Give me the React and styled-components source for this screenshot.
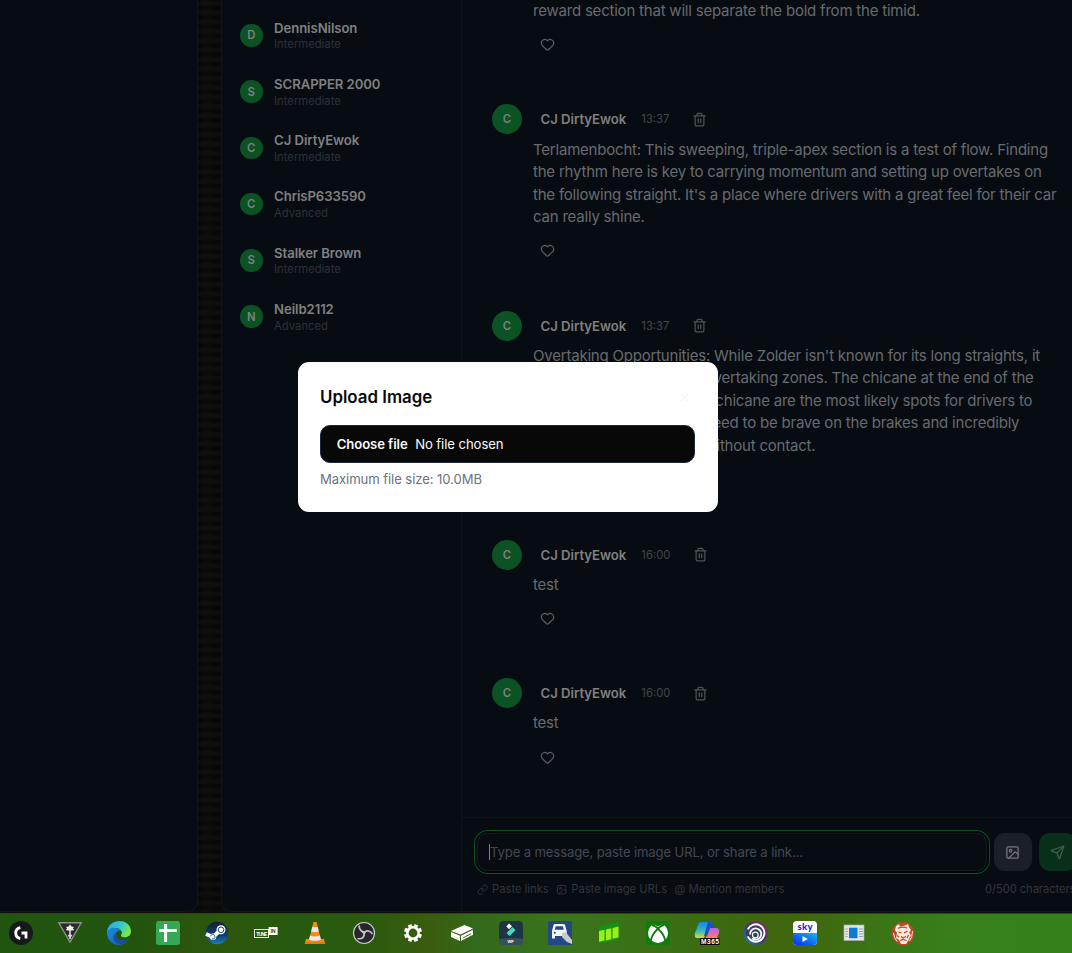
import React from 'react';
import styled, { createGlobalStyle } from 'styled-components';
import { Heart, Trash2, Image as ImageIcon, Send, X, Link } from 'lucide-react';

const Global = createGlobalStyle`
  * { box-sizing: border-box; }
  html, body { margin: 0; padding: 0; }
  body { background: #070c14; overflow: hidden; font-family: Inter, "Liberation Sans", sans-serif; }
`;

const Screen = styled.div`
  width: 1072px;
  height: 953px;
  overflow: hidden;
  display: flex;
  flex-direction: column;
`;

const Page = styled.div`
  height: 913px;
  display: flex;
  overflow: hidden;
  background-color: #0a0a0a;
  background-image:
    linear-gradient(27deg, #080808 4px, transparent 4.5px),
    linear-gradient(207deg, #080808 4px, transparent 4.5px),
    linear-gradient(90deg, #0e0e0e 9.4px, transparent 9.4px),
    linear-gradient(#0f0f0f 25%, #0c0c0c 50%, #0a0a0a 75%, #0d0d0d 100%);
  background-position: 6px 1px, 15.4px 5.7px, 6px 0, 6px 1px;
  background-size: 18.75px 9.375px;
`;

const SidePanel = styled.div`
  width: 198px;
  height: 912px;
  flex: none;
  background: #070c14;
  border-right: 1px solid #10151c;
  border-bottom: 1px solid #10151c;
  border-bottom-right-radius: 11px;
`;

const Main = styled.div`
  margin-left: 23px;
  width: 880px;
  height: 912px;
  flex: none;
  display: flex;
  background: #070c12;
  border-left: 1px solid #10151a;
  border-bottom: 1px solid #10151a;
  border-bottom-left-radius: 11px;
`;

const Members = styled.div`
  width: 240px;
  flex: none;
  padding: 18.6px 0 0 18px;
  border-right: 1px solid #0f141b;
  display: flex;
  flex-direction: column;
  gap: 22.5px;
`;

const Member = styled.div`
  display: flex;
  align-items: center;
  gap: 11.6px;
  height: 33.75px;
`;

const Avatar = styled.div`
  width: ${(p) => p.$size}px;
  height: ${(p) => p.$size}px;
  flex: none;
  border-radius: 50%;
  background: #0b5225;
  color: #808080;
  display: flex;
  align-items: center;
  justify-content: center;
  font-size: 11.25px;
  font-weight: 600;
`;

const MemberName = styled.div`
  font-size: 13.125px;
  line-height: 18.75px;
  font-weight: 600;
  letter-spacing: -0.06px;
  color: #808080;
`;

const MemberLevel = styled.div`
  font-size: 11.25px;
  line-height: 15px;
  color: #2d3138;
`;

const Chat = styled.div`
  flex: 1;
  display: flex;
  flex-direction: column;
`;

const Messages = styled.div`
  height: 817px;
  flex: none;
  overflow: hidden;
  display: flex;
  flex-direction: column;
  justify-content: flex-end;
  padding: 0 0 38.7px 30px;
`;

const MessageRow = styled.div`
  display: flex;
  flex: none;
  gap: 11px;
  margin-top: 38.8px;
`;

const MessageContent = styled.div`
  display: flex;
  flex-direction: column;
`;

const MessageHead = styled.div`
  height: 30px;
  margin-bottom: 4.1px;
  padding-left: 7.5px;
  display: flex;
  align-items: center;
  color: #4f5257;
`;

const Author = styled.span`
  font-size: 13.125px;
  font-weight: 600;
  color: #808080;
`;

const Time = styled.span`
  font-size: 11.25px;
  color: #41464e;
  margin: 0 22.6px 0 15.1px;
`;

const MessageText = styled.div`
  font-size: 15px;
  line-height: 22.5px;
  letter-spacing: -0.21px;
  color: #686b6e;
  white-space: pre;
`;

const Reaction = styled.div`
  height: 43.4px;
  padding: 14.6px 0 0 6.8px;
  color: #5a5d63;
  svg { display: block; }
`;

const Composer = styled.div`
  flex: 1;
  border-top: 1px solid #0f141b;
  padding: 15px 0 0 15px;
`;

const ComposeRow = styled.div`
  display: flex;
  height: 38px;
`;

const TextBox = styled.div`
  width: 510px;
  flex: none;
  border: 1px solid #14191f;
  border-radius: 11px;
  box-shadow: 0 0 0 2px #03060a, 0 0 0 3px #0b5225;
  display: flex;
  align-items: center;
  padding-left: 11px;
  margin-right: 7px;
  font-size: 13.125px;
  letter-spacing: -0.13px;
  color: #434952;
`;

const Caret = styled.span`
  width: 1px;
  height: 16px;
  background: #808080;
`;

const IconButton = styled.div`
  width: 38px;
  height: 38px;
  flex: none;
  margin-right: 7px;
  padding-right: 1px;
  border-radius: 11px;
  display: flex;
  align-items: center;
  justify-content: center;
  background: ${(p) => p.$bg};
  color: ${(p) => p.$fg};
`;

const Hints = styled.div`
  display: flex;
  align-items: center;
  height: 15px;
  margin-top: 10.7px;
  font-size: 11.25px;
  letter-spacing: -0.02px;
  color: #31353c;
  white-space: nowrap;
`;

const Hint = styled.span`
  display: flex;
  align-items: center;
  gap: 3.75px;
  margin-right: 7.5px;
`;

const Counter = styled.span`
  margin-left: 193px;
  letter-spacing: -0.1px;
`;

const Modal = styled.div`
  position: absolute;
  left: 298px;
  top: 362px;
  width: 420px;
  height: 150px;
  border-radius: 11px;
  background: #ffffff;
  padding: 22px;
`;

const ModalHead = styled.div`
  display: flex;
  align-items: center;
  justify-content: space-between;
  height: 26px;
  padding-right: 5.5px;
  margin-bottom: 15px;
  font-size: 16.875px;
  font-weight: 600;
  color: #0a0a0a;
`;

const FileField = styled.div`
  height: 37.5px;
  width: 375px;
  border-radius: 10px;
  border: 1px solid #1e293b;
  background: #080808;
  color: #f8fafc;
  display: flex;
  align-items: center;
  gap: 7.5px;
  padding-left: 15.7px;
  font-size: 13.125px;
  letter-spacing: -0.07px;
`;

const Choose = styled.span`
  font-weight: 600;
`;

const SizeNote = styled.div`
  margin-top: 7.5px;
  line-height: 18.75px;
  font-size: 13.125px;
  letter-spacing: -0.09px;
  color: #6b7280;
`;

const Taskbar = styled.div`
  height: 40px;
  border-top: 1px solid #24471c;
  display: flex;
  align-items: center;
  gap: 25px;
  padding: 0 0 1px 9px;
  background: linear-gradient(90deg, #20550f 0, #22540f 130px, #2d560c 215px, #265a10 300px, #2c5a0e 370px, #3a5c0e 430px, #33691a 475px, #39741c 560px, #397016 660px, #3c690f 730px, #40660e 800px, #3a7414 870px, #37801a 960px, #36801a 1072px);
  svg { display: block; flex: none; overflow: visible; }
`;

const Tile = ({ children }) => (
  <svg width="24" height="24" viewBox="0 0 24 24">{children}</svg>
);

const members = [
  ['DennisNilson', 'Intermediate'],
  ['SCRAPPER 2000', 'Intermediate'],
  ['CJ DirtyEwok', 'Intermediate'],
  ['ChrisP633590', 'Advanced'],
  ['Stalker Brown', 'Intermediate'],
  ['Neilb2112', 'Advanced'],
];

const messages = [
  {
    time: '13:37',
    text: "Terlamenbocht: This sweeping, triple-apex section is a test of flow. Finding\nthe rhythm here is key to carrying momentum and setting up overtakes on\nthe following straight. It's a place where drivers with a great feel for their car\ncan really shine.",
  },
  {
    time: '13:37',
    text: "Overtaking Opportunities: While Zolder isn't known for its long straights, it\ndoes have several prime overtaking zones. The chicane at the end of the\nback straight and the final chicane are the most likely spots for drivers to\nmake a move, but they'll need to be brave on the brakes and incredibly\naccurate to make it stick without contact.",
  },
  { time: '16:00', text: 'test' },
  { time: '16:00', text: 'test' },
];

const EarlierMessage = styled.div`
  flex: none;
  padding-left: 41px;
`;

function Message({ time, text }) {
  return (
    <MessageRow>
      <Avatar $size={30}>C</Avatar>
      <MessageContent>
        <MessageHead>
          <Author>CJ DirtyEwok</Author>
          <Time>{time}</Time>
          <Trash2 size={15} />
        </MessageHead>
        <MessageText>{text}</MessageText>
        <Reaction><Heart size={15} /></Reaction>
      </MessageContent>
    </MessageRow>
  );
}

function TaskbarIcons() {
  return (
    <>
      <Tile>
        <circle cx="12" cy="12" r="12" fill="#17191b" />
        <path d="M11.3 6.5A5.6 5.6 0 0 0 11.3 17.5M12.5 12H17V17.5" fill="none" stroke="#fff" strokeWidth="2.8" />
      </Tile>
      <Tile>
        <path d="M.8 1.8H23.2L12 21Z" fill="#282b28" stroke="#8c918a" strokeWidth="1.4" />
        <path d="M12 3.5L13.5 5.5L16 6L14.8 7.5L16.5 9L14 9.5H10L7.5 9L9.2 7.5L8 6L10.5 5.5Z" fill="#eee" />
        <path d="M12 9V18M10.3 14L12 16L13.7 14" fill="none" stroke="#ddd" strokeWidth="1.6" />
      </Tile>
      <Tile>
        <defs>
          <linearGradient id="edgeTop" x1="0" y1="0" x2="1" y2=".5"><stop offset="0" stopColor="#28a5e7" /><stop offset=".55" stopColor="#2fc7d2" /><stop offset="1" stopColor="#7be64b" /></linearGradient>
          <linearGradient id="edgeBottom" x1="0" y1="0" x2="1" y2="1"><stop offset="0" stopColor="#1a8ee1" /><stop offset="1" stopColor="#1258ab" /></linearGradient>
        </defs>
        <path d="M0 11C1-3 23-4 24 10C24 15 20 17 16 16C13 15.5 14 14 15 12C15 7 6 4 0 11Z" fill="url(#edgeTop)" />
        <path d="M0 12C1 6 10 5 14 10C10 9 8 12 9 15C10 20 17 21 22 18C18 25 8 26 3 20C1 18 0 15 0 12Z" fill="url(#edgeBottom)" />
        <path d="M8 12C4 17 8 24 15 23C19 22 21 20 22 18C17 20 9 20 8 12Z" fill="#164f9e" />
      </Tile>
      <Tile>
        <rect width="24" height="24" rx="2.5" fill="#35a853" />
        <path d="M3 9.5H21M9.6 3V21" stroke="#fff" strokeWidth="3" />
      </Tile>
      <Tile>
        <defs><linearGradient id="steam" x1="0" y1="0" x2="0" y2="1"><stop offset="0" stopColor="#11203d" /><stop offset=".6" stopColor="#123d71" /><stop offset="1" stopColor="#1683b5" /></linearGradient></defs>
        <circle cx="12" cy="12" r="11.2" fill="url(#steam)" />
        <path d="M1 13L8 16L15.5 9" stroke="#fff" strokeWidth="4" fill="none" />
        <circle cx="16" cy="8.8" r="4.5" fill="#fff" />
        <circle cx="16" cy="8.8" r="2.8" fill="none" stroke="#174777" strokeWidth="1" />
        <circle cx="8" cy="15.8" r="3.2" fill="#fff" />
        <path d="M5.5 15.3A2.3 2.3 0 1 1 7 18" fill="none" stroke="#174777" strokeWidth=".8" />
      </Tile>
      <Tile>
        <rect x=".5" y="8.5" width="14" height="8" fill="none" stroke="#ddebd8" />
        <rect x="14.6" y="6" width="9" height="8" fill="#fff" />
        <text x="2.3" y="14.6" fontFamily="Liberation Sans" fontSize="5" fontWeight="700" fill="#fff" textLength="11">TUNE</text>
        <text x="16.4" y="12" fontFamily="Liberation Sans" fontSize="5.3" fontWeight="700" fill="#2b4d1a">IN</text>
      </Tile>
      <Tile>
        <path d="M3 18H21L22.3 23H1.7Z" fill="#f38a12" />
        <path d="M10.5 1H13.5L18 19Q12 22 6 19Z" fill="#f58b16" />
        <path d="M9.3 6H14.7L15.8 10.5Q12 12 8.1 10.5Z" fill="#e5e8ea" />
        <path d="M7.1 14.5Q12 16.5 16.9 14.5L18 18.5Q12 21 6 18.5Z" fill="#e9ecee" />
        <path d="M2 22H22" stroke="#db6810" />
      </Tile>
      <Tile>
        <circle cx="12" cy="12" r="10.5" fill="#27262b" stroke="#c9cbca" strokeWidth="1.2" />
        <path d="M7.2 4.5C7 9 9.5 10.5 12 11.5C15 9 18 9.5 20.5 13M12 11.5C13 16 10 18.5 5.5 17.5" fill="none" stroke="#c6c6ca" strokeWidth="1.7" />
        <circle cx="12" cy="11.5" r="1.5" fill="#c9c9c9" />
      </Tile>
      <Tile>
        <circle cx="12" cy="12" r="5.7" fill="none" stroke="#fff" strokeWidth="2.6" />
        <g stroke="#fff" strokeWidth="3.8">
          {[22.5, 67.5, 112.5, 157.5, 202.5, 247.5, 292.5, 337.5].map((a) => (
            <path key={a} d="M12 3V5.7" transform={`rotate(${a} 12 12)`} />
          ))}
        </g>
      </Tile>
      <Tile>
        <path d="M1 10L14.5 4L23 7.5L10.5 13.5Z" fill="#fff" />
        <path d="M1 11L10 14.7V20L1 16ZM11 14.7L23 8.8V13.8L11 20Z" fill="#fff" />
        <path d="M13 17L21 12.6" stroke="#3c6d22" strokeWidth="1" />
      </Tile>
      <Tile>
        <rect width="24" height="24" rx="4.5" fill="#1d3444" />
        <path d="M0 18Q12 16 24 18V20Q24 24 20 24H4Q0 24 0 20Z" fill="#36505c" />
        <path d="M10 2.5L13 5.3L10 8.3L7.3 5.5Z" fill="#fff" />
        <path d="M7.5 12L13.5 6L16.5 9.2L10.5 15Z" fill="#44ddc2" />
        <text x="8.4" y="22.2" fontFamily="Liberation Sans" fontSize="4.2" fontWeight="700" fill="#fff">WF</text>
      </Tile>
      <Tile>
        <rect width="24" height="24" rx="1.5" fill="#234886" />
        <path d="M4 10L5.5 4Q6 3 7 3H15.5Q16.5 3 17 4L18.7 10V17.5H16V15H7V17.5H4Z" fill="#f3f5f6" />
        <path d="M6.8 8.7L7.8 5.2H14.8L15.8 8.7Z" fill="#234886" />
        <circle cx="6.8" cy="11.8" r="1" fill="#234886" />
        <path d="M14 12Q18 9 20 14L24 19V23L19 21L14 16Z" fill="#c9cbca" />
      </Tile>
      <Tile>
        <path d="M2 5.5L21.5 .8V18L2 23Z" fill="#139313" />
        <path d="M2 10L7.5 8.8V19.6L2 20.8ZM8.8 8.5L14.3 7.2V18.2L8.8 19.4ZM15.6 6.9L21.5 5.5V16.5L15.6 17.8Z" fill="#9bef14" />
      </Tile>
      <Tile>
        <rect width="24" height="24" rx="1" fill="#107c10" />
        <circle cx="12" cy="12" r="10" fill="#fff" />
        <path d="M5 3.5Q8.5 3 12 5.5Q15.5 3 19 3.5L12 1Z" fill="#107c10" />
        <path d="M6 4Q9 4.5 12 7.5Q15 4.5 18 4M12 7.8Q6 13 4.7 20M12 7.8Q18 13 19.3 20" fill="none" stroke="#107c10" strokeWidth="1.8" />
      </Tile>
      <Tile>
        <defs>
          <linearGradient id="copA" x1="0" y1="0" x2="0" y2="1"><stop offset="0" stopColor="#1684ed" /><stop offset=".55" stopColor="#31b9bc" /><stop offset="1" stopColor="#ead52c" /></linearGradient>
          <linearGradient id="copB" x1="0" y1="0" x2="0" y2="1"><stop offset="0" stopColor="#ab69ed" /><stop offset=".6" stopColor="#f26e91" /><stop offset="1" stopColor="#ff9b51" /></linearGradient>
        </defs>
        <path d="M6 1H16Q18 1 18 5L13 8L9 17H2Q-1 17 0 12L3 4Q4 1 6 1Z" fill="url(#copA)" />
        <path d="M15 7H21Q25 7 24 12L21 19H10Z" fill="url(#copB)" />
        <path d="M13 1H16Q18 1 19 7H15L12 15H9Z" fill="#1951ca" />
        <rect x="5" y="17" width="19.5" height="7" fill="#080808" />
        <text x="6" y="23" fontFamily="Liberation Sans" fontSize="6.6" fontWeight="700" fill="#fff" textLength="18">M365</text>
      </Tile>
      <Tile>
        <defs><linearGradient id="ubi" x1="1" y1="0" x2="0" y2="1"><stop offset="0" stopColor="#962c50" /><stop offset=".5" stopColor="#493083" /><stop offset="1" stopColor="#178a91" /></linearGradient></defs>
        <circle cx="11.5" cy="12" r="12" fill="url(#ubi)" />
        <circle cx="11.5" cy="12" r="9.7" fill="#3d3c5d" />
        <circle cx="11.7" cy="12" r="8.7" fill="none" stroke="#fff" strokeWidth="1.9" strokeDasharray="47 8" transform="rotate(205 11.7 12)" />
        <circle cx="11.7" cy="13" r="5.6" fill="none" stroke="#fff" strokeWidth="1.8" strokeDasharray="30 6" transform="rotate(175 11.7 13)" />
        <circle cx="11.3" cy="14" r="2.9" fill="#1b4f55" stroke="#fff" strokeWidth="1.2" />
      </Tile>
      <Tile>
        <defs><linearGradient id="sky" x1="0" y1="1" x2="1" y2="0"><stop offset="0" stopColor="#0629ed" /><stop offset="1" stopColor="#16b8f4" /></linearGradient></defs>
        <rect width="24" height="24" rx="4" fill="#fff" />
        <path d="M0 12H24V20Q24 24 20 24H4Q0 24 0 20Z" fill="url(#sky)" />
        <text x="4.5" y="8.8" fontFamily="Lato" fontSize="9.5" fontWeight="900" fill="#1b24e0" textLength="15">sky</text>
        <path d="M9.5 15L14.8 18L9.5 21Z" fill="#fff" />
      </Tile>
      <Tile>
        <rect x="2" y="4" width="20" height="15.5" fill="#e3e6e8" stroke="#a7adb1" strokeWidth=".7" />
        <rect x="7" y="6.7" width="8.5" height="10.5" fill="#0b7bd5" />
        <path d="M3.5 8H5.7M3.5 10.5H5.7M3.5 13H5.7M3.5 15.5H5.7M17 8H21M17 10.5H21M17 13H21M17 15.5H21" stroke="#92989c" strokeWidth=".9" />
      </Tile>
      <Tile>
        <circle cx="12" cy="12.5" r="11.5" fill="#b94a27" />
        <path d="M5 5L8 3L9 5.5L14 4.5L17 3L18 6L20 9L18 12L20 14L17 20L15 23H10L8 19L5 17L6 12L4 9Z" fill="#f4e8df" />
        <path d="M7 7.5Q11 5 16 7M7.5 11L10.5 12M13 12L16.5 10M10 15.5L12 17L15 15.5M9 19.5L12 18.5L15.5 19.5M6 14.5L8 16M17.5 14L16 17" fill="none" stroke="#b94a27" strokeWidth="1.3" />
        <path d="M2.5 12Q3 17 6 20.5M21.5 10Q21.5 16 18.5 20" stroke="#f4e8df" fill="none" />
      </Tile>
    </>
  );
}

export default function App() {
  return (
    <Screen>
      <Global />
      <Page>
        <SidePanel />
        <Main>
          <Members>
            {members.map(([name, level]) => (
              <Member key={name}>
                <Avatar $size={22.5}>{name[0]}</Avatar>
                <div>
                  <MemberName>{name}</MemberName>
                  <MemberLevel>{level}</MemberLevel>
                </div>
              </Member>
            ))}
          </Members>
          <Chat>
            <Messages>
              <EarlierMessage>
                <MessageText>reward section that will separate the bold from the timid.</MessageText>
                <Reaction><Heart size={15} /></Reaction>
              </EarlierMessage>
              {messages.map((m, i) => <Message key={i} {...m} />)}
            </Messages>
            <Composer>
              <ComposeRow>
                <TextBox><Caret />Type a message, paste image URL, or share a link...</TextBox>
                <IconButton $bg="#1b1f27" $fg="#75777a"><ImageIcon size={15} /></IconButton>
                <IconButton $bg="#082f1a" $fg="#3f5f4c"><Send size={15} /></IconButton>
              </ComposeRow>
              <Hints>
                <Hint><Link size={11.25} />Paste links</Hint>
                <Hint><ImageIcon size={11.25} />Paste image URLs</Hint>
                <Hint>@ Mention members</Hint>
                <Counter>0/500 characters</Counter>
              </Hints>
            </Composer>
          </Chat>
        </Main>
      </Page>
      <Taskbar><TaskbarIcons /></Taskbar>
      <Modal>
        <ModalHead>Upload Image<X size={13} color="#f5f5f5" strokeWidth={2} /></ModalHead>
        <FileField><Choose>Choose file</Choose><span>No file chosen</span></FileField>
        <SizeNote>Maximum file size: 10.0MB</SizeNote>
      </Modal>
    </Screen>
  );
}
